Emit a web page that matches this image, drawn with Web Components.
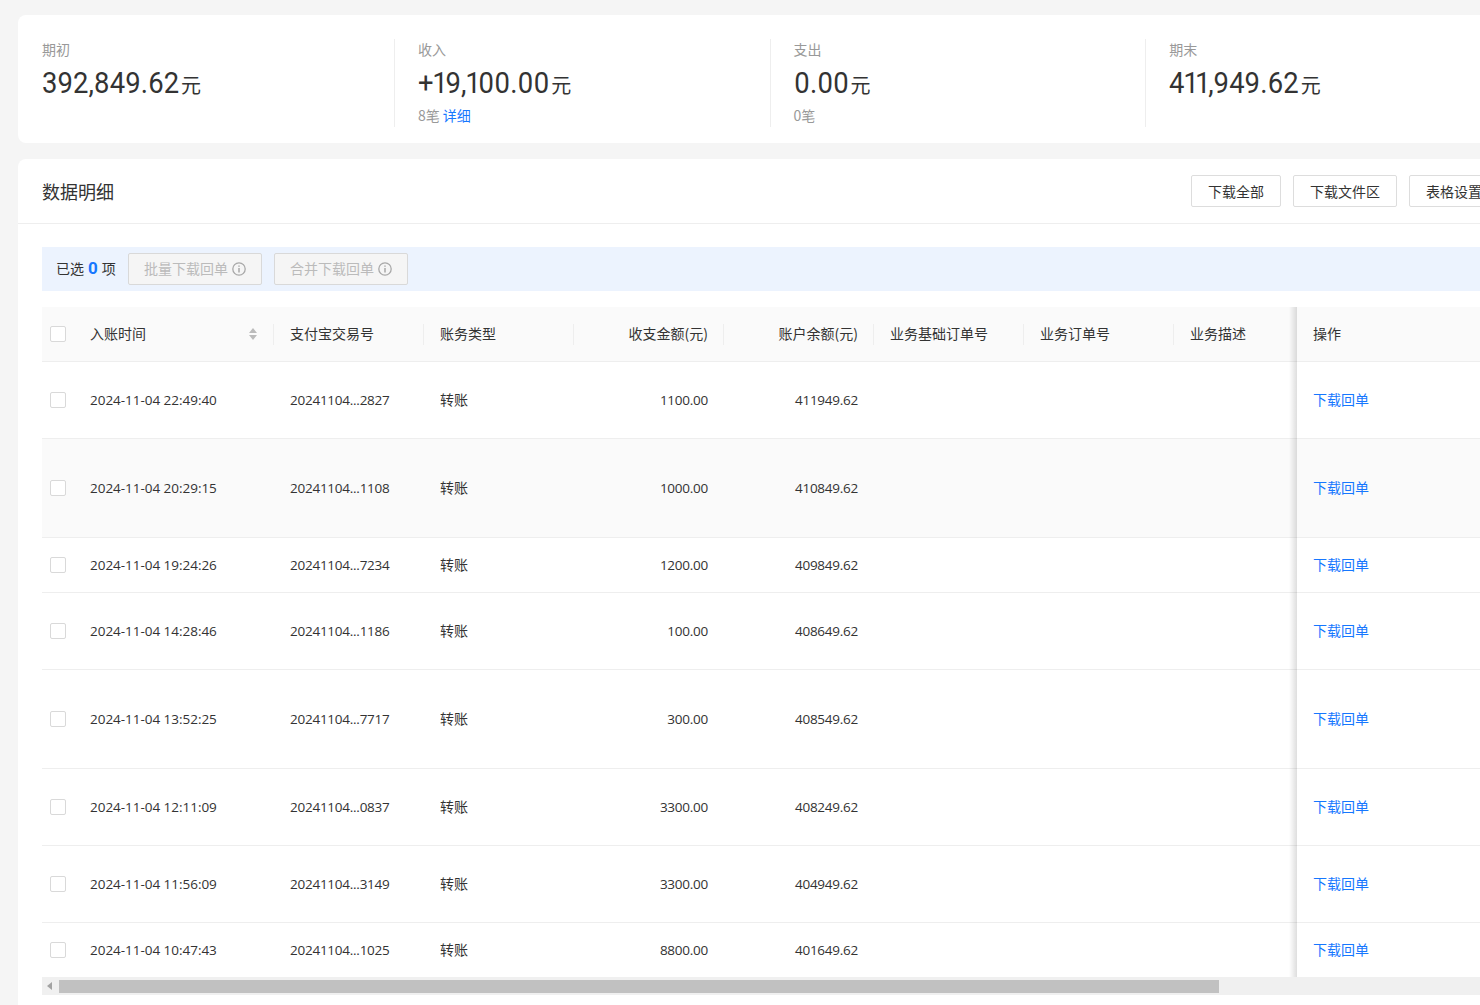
<!DOCTYPE html>
<html lang="zh">
<head>
<meta charset="utf-8">
<title>数据明细</title>
<style>
  html, body { margin: 0; height: 100%; overflow: hidden; }
  body {
    background: #f5f5f5;
    font-family: "Noto Sans CJK SC", "Open Sans", sans-serif;
    font-size: 14px;
    color: #333;
  }
  .page {
    width: 1505px;
    margin-left: 18px;
    padding-top: 15px;
    display: flex;
    flex-direction: column;
    gap: 16px;
  }
</style>
</head>
<body>
<div class="page">
  <stat-bar>
    <stat-item label="期初" amount="392,849.62"></stat-item>
    <stat-item label="收入" amount="+19,100.00" note="8笔" link="详细"></stat-item>
    <stat-item label="支出" amount="0.00" note="0笔"></stat-item>
    <stat-item label="期末" amount="411,949.62"></stat-item>
  </stat-bar>
  <detail-card heading="数据明细">
    <plain-button slot="actions">下载全部</plain-button>
    <plain-button slot="actions">下载文件区</plain-button>
    <plain-button slot="actions">表格设置</plain-button>
    <select-bar></select-bar>
    <bill-table></bill-table>
  </detail-card>
</div>

<script>
const rows = [
  ['2024-11-04 22:49:40', '20241104...2827', '1100.00', '411949.62', 77, false],
  ['2024-11-04 20:29:15', '20241104...1108', '1000.00', '410849.62', 99, true],
  ['2024-11-04 19:24:26', '20241104...7234', '1200.00', '409849.62', 55, false],
  ['2024-11-04 14:28:46', '20241104...1186', '100.00', '408649.62', 77, false],
  ['2024-11-04 13:52:25', '20241104...7717', '300.00', '408549.62', 99, false],
  ['2024-11-04 12:11:09', '20241104...0837', '3300.00', '408249.62', 77, false],
  ['2024-11-04 11:56:09', '20241104...3149', '3300.00', '404949.62', 77, false],
  ['2024-11-04 10:47:43', '20241104...1025', '8800.00', '401649.62', 54, false]
];

class StatBar extends HTMLElement {
  connectedCallback() {
    this.attachShadow({ mode: 'open' });
    this.shadowRoot.innerHTML = `
      <style>
        :host {
          display: flex;
          height: 128px;
          box-sizing: border-box;
          padding: 24px;
          background: #fff;
          border-radius: 8px;
        }
      </style>
      <slot></slot>
    `;
  }
}

class StatItem extends HTMLElement {
  connectedCallback() {
    const note = this.getAttribute('note');
    const link = this.getAttribute('link');
    this.attachShadow({ mode: 'open' });
    this.shadowRoot.innerHTML = `
      <style>
        :host {
          display: block;
          flex: 0 0 375.6px;
          box-sizing: border-box;
          height: 88px;
          padding-left: 23px;
          border-left: 1px solid #eee;
        }
        :host(:first-child) {
          flex-basis: 352px;
          padding-left: 0;
          border-left: 0;
        }
        .label { font-size: 14px; line-height: 20px; color: #999; }
        .amount {
          display: flex;
          align-items: baseline;
          margin-top: 4px;
          height: 40px;
          line-height: 40px;
          color: #333;
        }
        .num {
          display: inline-block;
          font-family: Roboto, sans-serif;
          font-size: 30px;
          font-variant-numeric: proportional-nums;
          transform: scaleX(.913);
          transform-origin: left;
        }
        .unit { font-size: 20px; margin-left: 2px; }
        .note { margin-top: 2px; font-size: 14px; line-height: 20px; color: #999; }
        .note a { color: #1677ff; margin-left: 3px; }
      </style>
      <div class="label">${this.getAttribute('label')}</div>
      <div class="amount"><span class="num">${this.getAttribute('amount')}</span><span class="unit">元</span></div>
      ${note ? `<div class="note">${note}${link ? `<a>${link}</a>` : ''}</div>` : ''}
    `;
    // scaleX keeps the layout width, so pull the unit back by what was lost
    const num = this.shadowRoot.querySelector('.num');
    num.style.marginRight = `${-num.getBoundingClientRect().width * (0.087 / 0.913)}px`;
  }
}

class PlainButton extends HTMLElement {
  connectedCallback() {
    this.attachShadow({ mode: 'open' });
    this.shadowRoot.innerHTML = `
      <style>
        :host {
          display: inline-flex;
          align-items: center;
          height: 32px;
          box-sizing: border-box;
          padding: 0 16px;
          background: #fff;
          border: 1px solid #ddd;
          border-radius: 2px;
          font-size: 14px;
          color: #333;
          white-space: nowrap;
        }
      </style>
      <slot></slot>
    `;
  }
}

class DetailCard extends HTMLElement {
  connectedCallback() {
    this.attachShadow({ mode: 'open' });
    this.shadowRoot.innerHTML = `
      <style>
        :host {
          display: block;
          background: #fff;
          border-radius: 8px 8px 0 0;
          height: 900px;
        }
        header {
          display: flex;
          align-items: center;
          justify-content: space-between;
          height: 64px;
          padding: 0 24px;
          border-bottom: 1px solid #eee;
        }
        h2 { margin: 0; font-size: 18px; font-weight: 400; color: #333; }
        .actions { display: flex; gap: 12px; }
        .body { padding: 23px 0 0 24px; }
      </style>
      <header>
        <h2>${this.getAttribute('heading')}</h2>
        <div class="actions"><slot name="actions"></slot></div>
      </header>
      <div class="body"><slot></slot></div>
    `;
  }
}

const infoIcon = `<svg width="14" height="14" viewBox="0 0 14 14" fill="none" stroke="#a8a8a8" stroke-width="1.3">
  <circle cx="7" cy="7" r="6.2"/><path d="M7 6v4.4M7 3.4v1.4" stroke-width="1.5"/></svg>`;

class SelectBar extends HTMLElement {
  connectedCallback() {
    this.attachShadow({ mode: 'open' });
    this.shadowRoot.innerHTML = `
      <style>
        :host {
          display: flex;
          align-items: center;
          gap: 12px;
          height: 44px;
          padding-left: 14px;
          background: #ecf3fe;
          font-size: 14px;
          color: #333;
        }
        .count { display: flex; align-items: center; width: 60px; margin-top: -2px; white-space: nowrap; }
        b { color: #1677ff; font-family: Roboto, sans-serif; font-size: 17px; font-weight: 700; margin: 0 4px; }
        .off {
          display: flex;
          align-items: center;
          gap: 4px;
          height: 32px;
          box-sizing: border-box;
          padding: 0 15px;
          background: #f5f5f5;
          border: 1px solid #d9d9d9;
          border-radius: 2px;
          color: #bbb;
        }
        .off span { margin-top: -2px; }
      </style>
      <div class="count">已选<b>0</b>项</div>
      <div class="off"><span>批量下载回单</span>${infoIcon}</div>
      <div class="off"><span>合并下载回单</span>${infoIcon}</div>
    `;
  }
}

class BillTable extends HTMLElement {
  connectedCallback() {
    this.attachShadow({ mode: 'open' });
    const heads = [['入账时间', ''], ['支付宝交易号', ''], ['账务类型', ''], ['收支金额(元)', 'r'], ['账户余额(元)', 'r'], ['业务基础订单号', ''], ['业务订单号', ''], ['业务描述', '']];
    const sorter = `<svg class="sort" width="8" height="12" viewBox="0 0 8 12" fill="#bbb"><path d="M4 0l4 5H0zM4 12L0 7h8z"/></svg>`;
    const headRow = `<div class="row head" style="height:55px">
      <div class="c chk"><i></i></div>
      ${heads.map(([t, a], i) => `<div class="c ${a} sep">${t}${i === 0 ? sorter : ''}</div>`).join('')}
      <div class="c op">操作</div>
    </div>`;
    const bodyRows = rows.map(r => `<div class="row ${r[5] ? 'hi' : ''}" style="height:${r[4]}px">
      <div class="c chk"><i></i></div>
      <div class="c num date">${r[0]}</div>
      <div class="c num">${r[1]}</div>
      <div class="c">转账</div>
      <div class="c r num">${r[2]}</div>
      <div class="c r num">${r[3]}</div>
      <div class="c"></div><div class="c"></div><div class="c"></div>
      <div class="c op"><a>下载回单</a></div>
    </div>`).join('');
    this.shadowRoot.innerHTML = `
      <style>
        :host { display: block; margin-top: 16px; font-size: 14px; color: #333; }
        .rows { height: 670px; overflow: hidden; }
        .row {
          display: grid;
          grid-template-columns: 32px 200px 150px 150px 150px 150px 150px 150px 123px 185px;
          box-sizing: border-box;
          border-bottom: 1px solid #eee;
        }
        .row:last-child { border-bottom: 0; }
        .head, .hi { background: #fafafa; }
        .c {
          display: flex;
          align-items: center;
          box-sizing: border-box;
          padding: 0 16px 2px;
          white-space: nowrap;
          position: relative;
        }
        .num { font-family: "Open Sans", sans-serif; font-size: 13.5px; letter-spacing: -.25px; padding-bottom: 1px; }
        .date { letter-spacing: -.03px; }
        .r { justify-content: flex-end; }
        .chk { padding: 0 0 0 8px; }
        .chk i {
          display: block;
          width: 16px;
          height: 16px;
          box-sizing: border-box;
          background: #fff;
          border: 1px solid #d9d9d9;
          border-radius: 2px;
        }
        .sep::after {
          content: '';
          position: absolute;
          right: 0;
          top: 17px;
          height: 21px;
          width: 1px;
          background: #eee;
        }
        .sep:nth-child(9)::after { display: none; }
        .sort { position: absolute; right: 17px; top: 21px; }
        .op {
          background: #fff;
          margin-bottom: -1px;
          border-bottom: 1px solid #eee;
        }
        .op::before {
          content: '';
          position: absolute;
          left: -8px;
          top: 0;
          bottom: -1px;
          width: 8px;
          background: linear-gradient(to left, rgba(0, 0, 0, .13), rgba(0, 0, 0, 0));
        }
        .head .op, .hi .op { background: #fafafa; }
        .op a { color: #1677ff; }
        .bar {
          display: flex;
          align-items: center;
          height: 18px;
          background: #f0f0f0;
        }
        .arrow { width: 0; height: 0; margin-left: 5px; border: 4px solid transparent; border-left: 0; border-right: 5px solid #a3a3a3; }
        .thumb { width: 1160px; height: 13px; margin-left: 7px; background: #c1c1c1; }
      </style>
      <div class="rows">${headRow}${bodyRows}</div>
      <div class="bar"><span class="arrow"></span><span class="thumb"></span></div>
    `;
  }
}

customElements.define('stat-bar', StatBar);
customElements.define('stat-item', StatItem);
customElements.define('plain-button', PlainButton);
customElements.define('detail-card', DetailCard);
customElements.define('select-bar', SelectBar);
customElements.define('bill-table', BillTable);
</script>
</body>
</html>
